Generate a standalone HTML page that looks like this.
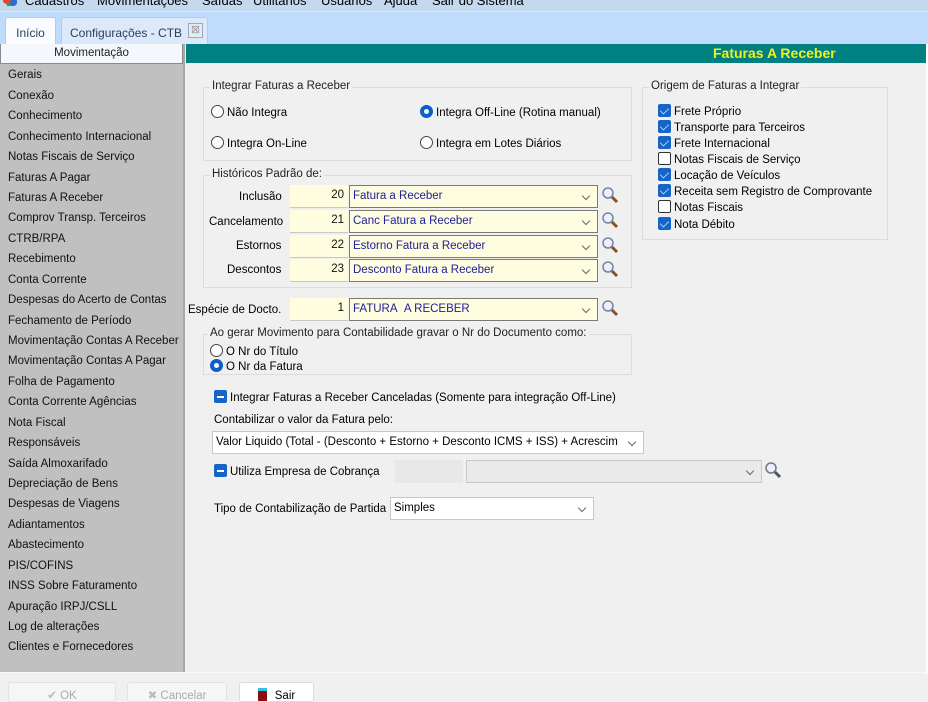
<!DOCTYPE html>
<html><head><meta charset="utf-8"><style>
*{margin:0;padding:0;box-sizing:border-box}
body{width:928px;height:699px;overflow:hidden;background:#f0f0f0;font-family:"Liberation Sans",sans-serif;font-size:11.5px;color:#000;position:relative}
.a{position:absolute;white-space:nowrap}
.menu{left:0;top:0;width:928px;height:11px;background:#c4d8ee;overflow:hidden}
.menu span{position:absolute;top:-7px;font-size:13px}
.tabs{left:0;top:11px;width:928px;height:33px;background:#c0dcfc;border-top:1px solid #dde9f7}
.tab{position:absolute;top:5px;height:28px;border:1px solid #b4cde6;border-bottom:none;border-radius:3px 3px 0 0;font-size:12px;padding-top:8px;color:#2a3f5a}
.side{left:0;top:44px;width:185px;height:628px;background:#c0c0c0;border-right:2px solid #a8a8a8}
.sh{left:0;top:44px;width:183px;height:20px;background:#f4f8fc;border:1px solid #8a8a8a;border-top:none;text-align:center;font-size:11.5px;padding-top:3px;color:#222}
.it{left:8px;font-size:11.5px;color:#111}
.teal{left:186px;top:44px;width:740px;height:19px;background:#008080}
.gb{position:absolute;border:1px solid #dcdcdc}
.lg{position:absolute;top:-8px;left:6px;background:#f0f0f0;padding:0 2px;color:#222}
.rad{display:inline-block;width:13px;height:13px;border:1px solid #444;border-radius:50%;background:#fff;vertical-align:-2px;margin-right:3px}
.rad.on{border:4px solid #0a5fc8;background:#fff}
.cb{display:inline-block;width:13px;height:13px;border:1px solid #333;border-radius:2px;background:#fff;vertical-align:-2px;margin-right:3px;position:relative}
.cb.on{background:#1565c8;border-color:#1565c8}
.cb.on:after{content:"";position:absolute;left:3px;top:1px;width:4px;height:7px;border:solid #a9c9ee;border-width:0 1.5px 1.5px 0;transform:rotate(45deg)}
.cb.mi{background:#1565c8;border-color:#1565c8}
.cb.mi:after{content:"";position:absolute;left:2px;top:5px;width:7px;height:1.5px;background:#fff}
.num{position:absolute;height:23px;background:#fffde0;border-bottom:1px solid #c8c8c8;text-align:right;padding:4px 4px 0 0;color:#111}
.sel{position:absolute;height:23px;background:#fffde0;border:1px solid #7a7a7a;padding:4px 0 0 3px;color:#20209a;overflow:hidden}
.sel:after,.dd:after{content:"";position:absolute;right:8px;top:7px;width:5px;height:5px;border:solid #666;border-width:0 1px 1px 0;transform:rotate(45deg)}
.dd{position:absolute;height:23px;background:#fff;border:1px solid #c8c8c8;padding:4px 22px 0 3px;overflow:hidden}
.lp{position:absolute;width:20px;height:20px}
.btn{position:absolute;top:682px;height:20px;background:#f6f6f6;border:1px solid #e2e2e2;border-radius:3px;text-align:center;padding-top:5px}
</style></head><body>
<div class="a menu">
<span style="left:2px;top:-4px;width:16px;height:10px;background:radial-gradient(circle at 30% 40%,#e04a2a 30%,transparent 32%),radial-gradient(circle at 70% 60%,#2a70d0 30%,transparent 32%),radial-gradient(circle at 50% 80%,#3aa040 30%,transparent 32%);"></span>
<span style="left:25px">Cadastros</span><span style="left:97px">Movimentações</span><span style="left:202px">Saídas</span><span style="left:253px">Utilitários</span><span style="left:321px">Usuários</span><span style="left:384px">Ajuda</span><span style="left:432px">Sair do Sistema</span>
</div>
<div class="a tabs">
<div class="tab" style="left:5px;width:51px;background:#fafcff;text-align:center">Início</div>
<div class="tab" style="left:61px;width:147px;background:#dbe9fa;padding-left:8px">Configurações - CTB<span style="position:absolute;left:126px;top:5px;width:15px;height:15px;border:1px solid #9ab;background:#e4ecf4;font-size:11px;line-height:13px;text-align:center;color:#999">⊠</span></div>
</div>
<div class="a side"></div>
<div class="a sh">Movimentação</div>
<div class="a it" style="top:69px">Gerais</div>
<div class="a it" style="top:90px">Conexão</div>
<div class="a it" style="top:110px">Conhecimento</div>
<div class="a it" style="top:131px">Conhecimento Internacional</div>
<div class="a it" style="top:151px">Notas Fiscais de Serviço</div>
<div class="a it" style="top:172px">Faturas A Pagar</div>
<div class="a it" style="top:192px">Faturas A Receber</div>
<div class="a it" style="top:212px">Comprov Transp. Terceiros</div>
<div class="a it" style="top:233px">CTRB/RPA</div>
<div class="a it" style="top:253px">Recebimento</div>
<div class="a it" style="top:274px">Conta Corrente</div>
<div class="a it" style="top:294px">Despesas do Acerto de Contas</div>
<div class="a it" style="top:315px">Fechamento de Período</div>
<div class="a it" style="top:335px">Movimentação Contas A Receber</div>
<div class="a it" style="top:355px">Movimentação Contas A Pagar</div>
<div class="a it" style="top:376px">Folha de Pagamento</div>
<div class="a it" style="top:396px">Conta Corrente Agências</div>
<div class="a it" style="top:417px">Nota Fiscal</div>
<div class="a it" style="top:437px">Responsáveis</div>
<div class="a it" style="top:458px">Saída Almoxarifado</div>
<div class="a it" style="top:478px">Depreciação de Bens</div>
<div class="a it" style="top:498px">Despesas de Viagens</div>
<div class="a it" style="top:519px">Adiantamentos</div>
<div class="a it" style="top:539px">Abastecimento</div>
<div class="a it" style="top:560px">PIS/COFINS</div>
<div class="a it" style="top:580px">INSS Sobre Faturamento</div>
<div class="a it" style="top:601px">Apuração IRPJ/CSLL</div>
<div class="a it" style="top:621px">Log de alterações</div>
<div class="a it" style="top:641px">Clientes e Fornecedores</div>
<div class="a teal"></div>
<div class="a" style="left:713px;top:45px;font-size:14px;font-weight:bold;color:#f0f020">Faturas A Receber</div>
<div class="a" style="left:926px;top:44px;width:2px;height:630px;background:#fff"></div>
<div class="a" style="left:0;top:672px;width:928px;height:1px;background:#fafafa"></div>

<div class="gb" style="left:203px;top:87px;width:429px;height:74px"><span class="lg">Integrar Faturas a Receber</span>
<div class="a" style="left:7px;top:17px"><span class="rad"></span>Não Integra</div>
<div class="a" style="left:216px;top:17px"><span class="rad on"></span>Integra Off-Line (Rotina manual)</div>
<div class="a" style="left:7px;top:48px"><span class="rad"></span>Integra On-Line</div>
<div class="a" style="left:216px;top:48px"><span class="rad"></span>Integra em Lotes Diários</div>
</div>

<div class="gb" style="left:642px;top:87px;width:246px;height:153px"><span class="lg">Origem de Faturas a Integrar</span>
<div class="a" style="left:15px;top:16px"><span class="cb on"></span>Frete Próprio</div>
<div class="a" style="left:15px;top:32px"><span class="cb on"></span>Transporte para Terceiros</div>
<div class="a" style="left:15px;top:48px"><span class="cb on"></span>Frete Internacional</div>
<div class="a" style="left:15px;top:64px"><span class="cb"></span>Notas Fiscais de Serviço</div>
<div class="a" style="left:15px;top:80px"><span class="cb on"></span>Locação de Veículos</div>
<div class="a" style="left:15px;top:96px"><span class="cb on"></span>Receita sem Registro de Comprovante</div>
<div class="a" style="left:15px;top:112px"><span class="cb"></span>Notas Fiscais</div>
<div class="a" style="left:15px;top:129px"><span class="cb on"></span>Nota Débito</div>
</div>

<div class="gb" style="left:203px;top:175px;width:429px;height:113px"><span class="lg">Históricos Padrão de:</span></div>
<div class="a" style="left:239px;top:191px">Inclusão</div>
<div class="a" style="left:209px;top:216px">Cancelamento</div>
<div class="a" style="left:236px;top:240px">Estornos</div>
<div class="a" style="left:227px;top:264px">Descontos</div>
<div class="a" style="left:188px;top:304px">Espécie de Docto.</div>

<div class="num" style="left:290px;top:185px;width:58px">20</div><div class="sel" style="left:349px;top:185px;width:249px">Fatura a Receber</div>
<div class="num" style="left:290px;top:210px;width:58px">21</div><div class="sel" style="left:349px;top:210px;width:249px">Canc Fatura a Receber</div>
<div class="num" style="left:290px;top:235px;width:58px">22</div><div class="sel" style="left:349px;top:235px;width:249px">Estorno Fatura a Receber</div>
<div class="num" style="left:290px;top:259px;width:58px">23</div><div class="sel" style="left:349px;top:259px;width:249px">Desconto Fatura a Receber</div>
<div class="num" style="left:290px;top:298px;width:58px">1</div><div class="sel" style="left:349px;top:298px;width:249px">FATURA&nbsp;&nbsp;A RECEBER</div>

<svg class="lp" style="left:600px;top:186px" viewBox="0 0 20 20"><circle cx="8" cy="7" r="5" fill="#eef" stroke="#6a8aa0" stroke-width="1.5"/><path d="M12 11l5 5" stroke="#8a5020" stroke-width="3"/></svg>
<svg class="lp" style="left:600px;top:211px" viewBox="0 0 20 20"><circle cx="8" cy="7" r="5" fill="#eef" stroke="#6a8aa0" stroke-width="1.5"/><path d="M12 11l5 5" stroke="#8a5020" stroke-width="3"/></svg>
<svg class="lp" style="left:600px;top:236px" viewBox="0 0 20 20"><circle cx="8" cy="7" r="5" fill="#eef" stroke="#6a8aa0" stroke-width="1.5"/><path d="M12 11l5 5" stroke="#8a5020" stroke-width="3"/></svg>
<svg class="lp" style="left:600px;top:260px" viewBox="0 0 20 20"><circle cx="8" cy="7" r="5" fill="#eef" stroke="#6a8aa0" stroke-width="1.5"/><path d="M12 11l5 5" stroke="#8a5020" stroke-width="3"/></svg>
<svg class="lp" style="left:600px;top:299px" viewBox="0 0 20 20"><circle cx="8" cy="7" r="5" fill="#eef" stroke="#6a8aa0" stroke-width="1.5"/><path d="M12 11l5 5" stroke="#8a5020" stroke-width="3"/></svg>
<svg class="lp" style="left:763px;top:461px" viewBox="0 0 20 20"><circle cx="8" cy="7" r="5" fill="#eef" stroke="#6a7a88" stroke-width="1.5"/><path d="M12 11l5 5" stroke="#555" stroke-width="3"/></svg>

<div class="gb" style="left:203px;top:334px;width:429px;height:41px"><span class="lg" style="left:4px">Ao gerar Movimento para Contabilidade gravar o Nr do Documento como:</span>
<div class="a" style="left:6px;top:9px"><span class="rad"></span>O Nr do Título</div>
<div class="a" style="left:6px;top:24px"><span class="rad on"></span>O Nr da Fatura</div>
</div>

<div class="a" style="left:214px;top:390px"><span class="cb mi"></span>Integrar Faturas a Receber Canceladas (Somente para integração Off-Line)</div>
<div class="a" style="left:214px;top:414px">Contabilizar o valor da Fatura pelo:</div>
<div class="dd" style="left:212px;top:431px;width:432px">Valor Liquido (Total - (Desconto + Estorno + Desconto ICMS + ISS) + Acrescim</div>
<div class="a" style="left:214px;top:464px"><span class="cb mi"></span>Utiliza Empresa de Cobrança</div>
<div class="a" style="left:395px;top:460px;width:68px;height:23px;background:#e8e8e8"></div>
<div class="dd" style="left:466px;top:460px;width:296px;background:#eaeaea"></div>
<div class="a" style="left:214px;top:503px">Tipo de Contabilização de Partida</div>
<div class="dd" style="left:390px;top:497px;width:204px">Simples</div>

<div class="btn" style="left:8px;width:108px;color:#aaa"><span style="color:#bbb">✔</span> OK</div>
<div class="btn" style="left:127px;width:100px;color:#aaa"><span style="color:#bbb">✖</span> Cancelar</div>
<div class="btn" style="left:239px;width:75px;background:#fff;border-color:#ddd"><span style="display:inline-block;width:9px;height:13px;background:#8a1010;vertical-align:-2px;margin-right:8px;border-top:3px solid #30c0e0"></span>Sair</div>
</body></html>
